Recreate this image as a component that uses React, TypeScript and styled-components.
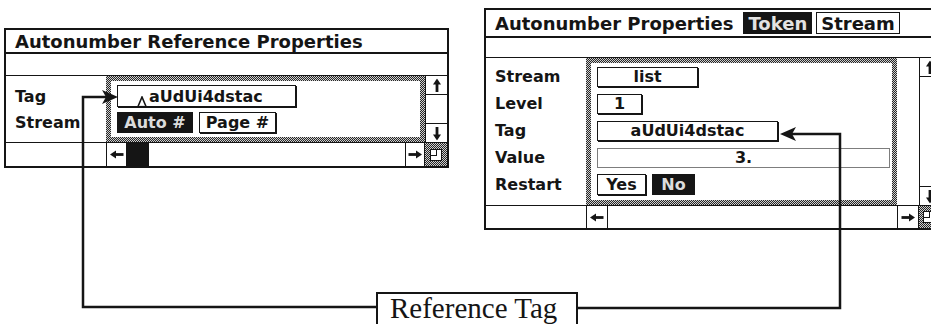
import React from 'react';
import styled, { createGlobalStyle } from 'styled-components';

const INK = '#151515';
const DITHER = 'repeating-conic-gradient(#262626 0 25%, #cfcfcf 0 50%) 0 0 / 2px 2px';

const GlobalStyle = createGlobalStyle`
	* { box-sizing: border-box; }
	html, body { margin: 0; padding: 0; background: #fff; }
	body {
		font-family: 'DejaVu Sans', 'Liberation Sans', sans-serif;
		color: ${INK};
	}
`;

type Dir = 'left' | 'right' | 'up' | 'down';

const rotation: Record<Dir, number> = { left: 0, up: 90, right: 180, down: 270 };

const Arrow: React.FC<{ dir: Dir }> = ({ dir }) => (
	<ArrowSvg $deg={rotation[dir]} width="14" height="9" viewBox="0 0 14 9">
		<polygon points="0,4.5 6,0.5 6,8.5" fill={INK} />
		<rect x="5" y="3.1" width="8.5" height="2.8" fill={INK} />
	</ArrowSvg>
);

const Caret = () => (
	<CaretSvg width="10" height="11" viewBox="0 0 10 11">
		<path d="M1 10.5 L5 1 L9 10.5" fill="none" stroke={INK} strokeWidth="1.6" />
		<path d="M3 10.5 H7" stroke={INK} strokeWidth="1.2" />
	</CaretSvg>
);

const ResizeGlyph = () => (
	<svg width="12" height="12" viewBox="0 0 12 12">
		<rect x="0.5" y="0.5" width="11" height="11" fill="#fff" stroke={INK} />
		<rect x="0.5" y="0.5" width="6" height="6" fill="#fff" stroke={INK} />
	</svg>
);

export default function App() {
	return (
		<>
			<GlobalStyle />
			<Canvas>
				{/* reference property sheet */}
				<Window $x={4} $y={28} $w={445}>
					<TitleBar $h={24}>
						<TitleText>Autonumber Reference Properties</TitleText>
					</TitleBar>
					<CommandBar $h={22} />
					<Body $h={66}>
						<Labels $w={100} $top={7} $row={26}>
							<Label>Tag</Label>
							<Label>Stream</Label>
						</Labels>
						<Frame $w={319}>
							<FrameInner $top={2} $row={26}>
								<FieldRow>
									<Field $w={179} $h={22} $align="left">
										<Caret />
										aUdUi4dstac
									</Field>
								</FieldRow>
								<FieldRow>
									<Toggle $w={76} $on>Auto #</Toggle>
									<Toggle $w={77}>Page #</Toggle>
								</FieldRow>
							</FrameInner>
						</Frame>
						<VScroll $w={22}>
							<VArrow $end="top"><Arrow dir="up" /></VArrow>
							<VArrow $end="bottom"><Arrow dir="down" /></VArrow>
						</VScroll>
					</Body>
					<ScrollRow $h={24}>
						<ScrollBlank $w={100} />
						<HArrow $w={21}><Arrow dir="left" /></HArrow>
						<Thumb $w={22} />
						<Track />
						<HArrow $w={20}><Arrow dir="right" /></HArrow>
						<Resize $w={22}><ResizeGlyph /></Resize>
					</ScrollRow>
				</Window>

				{/* autonumber property sheet */}
				<Window $x={484} $y={8} $w={457}>
					<TitleBar $h={28}>
						<TitleText $gap={6}>Autonumber Properties</TitleText>
						<TitleButton $on>Token</TitleButton>
						<TitleButton>Stream</TitleButton>
					</TitleBar>
					<CommandBar $h={20} />
					<Body $h={147}>
						<Labels $w={100} $top={5} $row={27}>
							<Label>Stream</Label>
							<Label>Level</Label>
							<Label>Tag</Label>
							<Label>Value</Label>
							<Label>Restart</Label>
						</Labels>
						<Frame $w={311}>
							<FrameInner $top={0} $row={27}>
								<FieldRow><Field $w={101}>list</Field></FieldRow>
								<FieldRow><Field $w={45}>1</Field></FieldRow>
								<FieldRow><Field $w={181}>aUdUi4dstac</Field></FieldRow>
								<FieldRow><Field $w={293} $faint>3.</Field></FieldRow>
								<FieldRow>
									<Toggle $w={49}>Yes</Toggle>
									<Toggle $w={43} $on>No</Toggle>
								</FieldRow>
							</FrameInner>
						</Frame>
						<Gutter $w={22} />
						<VScroll $w={20}>
							<VArrow $end="top"><Arrow dir="up" /></VArrow>
							<VArrow $end="bottom"><Arrow dir="down" /></VArrow>
						</VScroll>
					</Body>
					<ScrollRow $h={23}>
						<ScrollBlank $w={100} />
						<HArrow $w={22}><Arrow dir="left" /></HArrow>
						<Track />
						<HArrow $w={22}><Arrow dir="right" /></HArrow>
						<Resize $w={20}><ResizeGlyph /></Resize>
					</ScrollRow>
				</Window>

				<Wires width="931" height="324" viewBox="0 0 931 324">
					<path d="M376 307 H83 V97 H106" fill="none" stroke={INK} strokeWidth="2.5" />
					<path d="M118 97 L102 90 L106 97 L102 104 Z" fill={INK} />
					<path d="M578 308 H840 V134 H792" fill="none" stroke={INK} strokeWidth="2.5" />
					<path d="M780 134 L796 127 L792 134 L796 141 Z" fill={INK} />
				</Wires>

				<Callout>Reference Tag</Callout>
			</Canvas>
		</>
	);
}

const Canvas = styled.div`
	position: relative;
	width: 931px;
	height: 324px;
	overflow: hidden;
	background: #fff;
`;

const Window = styled.section<{ $x: number; $y: number; $w: number }>`
	position: absolute;
	left: ${p => p.$x}px;
	top: ${p => p.$y}px;
	width: ${p => p.$w}px;
	z-index: 1;

	display: flex;
	flex-direction: column;

	border: 2px solid ${INK};
	background: #fff;
`;

const TitleBar = styled.header<{ $h: number }>`
	height: ${p => p.$h}px;
	display: flex;
	align-items: center;
	gap: 4px;
	padding-left: 9px;

	border-bottom: 2px solid ${INK};
	font-size: 18px;
	font-weight: bold;
	white-space: nowrap;
`;

const TitleText = styled.span<{ $gap?: number }>`
	margin-right: ${p => p.$gap ?? 0}px;
`;

const TitleButton = styled.span<{ $on?: boolean }>`
	height: 22px;
	display: flex;
	align-items: center;
	padding: 0 4px;

	border: 1.5px solid ${INK};
	background: ${p => p.$on ? INK : '#fff'};
	color: ${p => p.$on ? '#e2e2e2' : INK};
`;

const CommandBar = styled.div<{ $h: number }>`
	height: ${p => p.$h}px;
	border-bottom: 1.5px solid ${INK};
`;

const Body = styled.div<{ $h: number }>`
	height: ${p => p.$h}px;
	display: flex;
`;

const Labels = styled.div<{ $w: number; $top: number; $row: number }>`
	width: ${p => p.$w}px;
	flex: none;
	display: grid;
	grid-auto-rows: ${p => p.$row}px;
	align-content: start;
	padding: ${p => p.$top}px 0 0 9px;

	font-size: 16px;
	font-weight: bold;
`;

const Label = styled.div`
	display: flex;
	align-items: center;
	white-space: nowrap;
`;

const Frame = styled.div<{ $w: number }>`
	width: ${p => p.$w}px;
	flex: none;
	padding: 5px;
	background: ${DITHER};
`;

const FrameInner = styled.div<{ $top: number; $row: number }>`
	height: 100%;
	display: grid;
	grid-auto-rows: ${p => p.$row}px;
	align-content: start;
	padding: ${p => p.$top}px 0 0 6px;
	background: #fff;
`;

const FieldRow = styled.div`
	display: flex;
	align-items: center;
	gap: 6px;
`;

const Field = styled.div<{ $w: number; $h?: number; $align?: 'left' | 'center'; $faint?: boolean }>`
	width: ${p => p.$w}px;
	height: ${p => p.$h ?? 20}px;
	display: flex;
	align-items: center;
	justify-content: ${p => p.$align === 'left' ? 'flex-start' : 'center'};
	padding-left: ${p => p.$align === 'left' ? 19 : 0}px;

	border: 1px solid ${p => p.$faint ? '#7d7d7d' : INK};
	box-shadow: ${p => p.$faint ? 'none' : `1px 1px 0 ${INK}`};
	font-size: 16px;
	font-weight: bold;
	white-space: nowrap;
`;

const Toggle = styled.div<{ $w: number; $on?: boolean }>`
	width: ${p => p.$w}px;
	height: 21px;
	display: flex;
	align-items: center;
	justify-content: center;

	border: 1px solid ${INK};
	box-shadow: ${p => p.$on ? 'none' : `1px 1px 0 ${INK}`};
	background: ${p => p.$on ? INK : '#fff'};
	color: ${p => p.$on ? '#dcdcdc' : INK};
	font-size: 16px;
	font-weight: bold;
	white-space: nowrap;
`;

const CaretSvg = styled.svg`
	align-self: flex-end;
	margin: 0 2px -1px 0;
`;

const Gutter = styled.div<{ $w: number }>`
	width: ${p => p.$w}px;
	flex: none;
`;

const VScroll = styled.div<{ $w: number }>`
	width: ${p => p.$w}px;
	flex: none;
	display: flex;
	flex-direction: column;
	justify-content: space-between;
	border-left: 1.5px solid ${INK};
`;

const VArrow = styled.div<{ $end: 'top' | 'bottom' }>`
	height: 19px;
	display: flex;
	align-items: center;
	justify-content: center;
	border-${p => p.$end === 'top' ? 'bottom' : 'top'}: 1px solid ${INK};
`;

const ArrowSvg = styled.svg<{ $deg: number }>`
	transform: rotate(${p => p.$deg}deg);
`;

const ScrollRow = styled.div<{ $h: number }>`
	height: ${p => p.$h}px;
	display: flex;
	border-top: 1.5px solid ${INK};
`;

const ScrollBlank = styled.div<{ $w: number }>`
	width: ${p => p.$w}px;
	flex: none;
`;

const HArrow = styled.div<{ $w: number }>`
	width: ${p => p.$w}px;
	flex: none;
	display: flex;
	align-items: center;
	justify-content: center;
	border-left: 1px solid ${INK};
	border-right: 1px solid ${INK};
`;

const Thumb = styled.div<{ $w: number }>`
	width: ${p => p.$w}px;
	flex: none;
	background: ${INK};
`;

const Track = styled.div`
	flex: 1;
`;

const Resize = styled.div<{ $w: number }>`
	width: ${p => p.$w}px;
	flex: none;
	display: flex;
	align-items: center;
	justify-content: center;
	background: ${DITHER};
`;

const Wires = styled.svg`
	position: absolute;
	left: 0;
	top: 0;
	z-index: 2;
	pointer-events: none;
`;

const Callout = styled.div`
	position: absolute;
	left: 376px;
	top: 292px;
	width: 202px;
	height: 44px;
	z-index: 3;
	padding-left: 12px;

	border: 2px solid ${INK};
	background: #fff;
	font-family: 'Liberation Serif', 'Times New Roman', serif;
	font-size: 29px;
	line-height: 29px;
`;
